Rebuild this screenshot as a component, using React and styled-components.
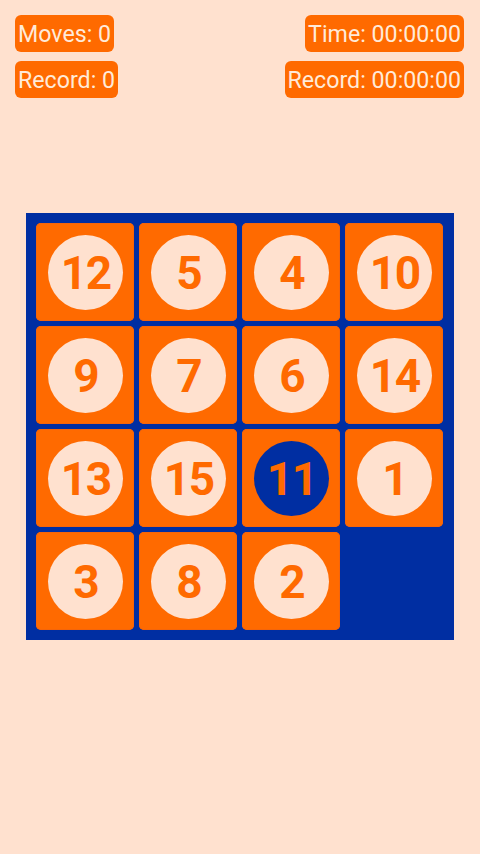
import React from 'react'
import styled, { createGlobalStyle } from 'styled-components'

const GlobalStyle = createGlobalStyle`
  html, body {
    margin: 0;
    padding: 0;
    background: #ffe1cf;
  }
  body {
    font-family: Roboto, "Liberation Sans", sans-serif;
  }
`

const Screen = styled.div`
  width: 480px;
  height: 854px;
  display: flex;
  flex-direction: column;
  background: #ffe1cf;
`

const Header = styled.div`
  display: flex;
  justify-content: space-between;
  padding: 15px 16px 0 15px;
`

const Column = styled.div`
  display: flex;
  flex-direction: column;
  align-items: ${p => (p.right ? 'flex-end' : 'flex-start')};
  gap: 9px;
`

const Badge = styled.div`
  height: 37px;
  display: flex;
  align-items: center;
  padding: 3px 3px 0;
  box-sizing: border-box;
  border-radius: 6px;
  background: #ff6a00;
  color: #ffead9;
  font-size: 23.2px;
  line-height: 1;
`

const Board = styled.div`
  align-self: flex-start;
  margin: 115px 0 0 26px;
  width: 428px;
  height: 427px;
  box-sizing: border-box;
  padding: 10px 11px 9px 10px;
  background: #002ea2;
  display: grid;
  grid-template-columns: repeat(4, 98px);
  grid-template-rows: repeat(4, 98px);
  gap: 5px;
`

const Tile = styled.div`
  border-radius: 5px;
  background: #ff6a00;
  box-shadow: inset 0 0 0 1px #f5650a;
  display: flex;
  align-items: center;
  justify-content: center;
`

const Disc = styled.div`
  width: 75px;
  height: 75px;
  border-radius: 50%;
  background: ${p => (p.active ? '#002ea2' : '#ffe1cf')};
  color: #ff6a00;
  display: flex;
  align-items: center;
  justify-content: center;
  font-size: 46px;
  font-weight: 700;
  letter-spacing: -1.5px;
  line-height: 1;
  padding: 2px 0 0 1.5px;
  box-sizing: border-box;
`

const tiles = [12, 5, 4, 10, 9, 7, 6, 14, 13, 15, 11, 1, 3, 8, 2, null]

export default function App() {
  return (
    <Screen>
      <GlobalStyle />
      <Header>
        <Column>
          <Badge>Moves: 0</Badge>
          <Badge>Record: 0</Badge>
        </Column>
        <Column right>
          <Badge>Time: 00:00:00</Badge>
          <Badge>Record: 00:00:00</Badge>
        </Column>
      </Header>
      <Board>
        {tiles.map((n, i) =>
          n === null ? (
            <div key={i} />
          ) : (
            <Tile key={i}>
              <Disc active={n === 11}>{n}</Disc>
            </Tile>
          )
        )}
      </Board>
    </Screen>
  )
}
